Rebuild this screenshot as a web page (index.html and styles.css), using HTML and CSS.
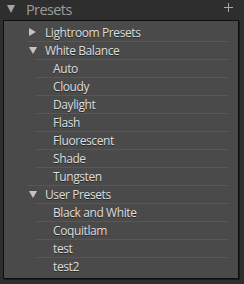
FILE: index.html
```html
<!DOCTYPE html>
<html>
<head>
<meta charset="utf-8">
<link rel="stylesheet" href="styles.css">
</head>
<body>
<div class="header">
  <span class="hdr-tri"></span>
  <span class="hdr-title">Presets</span>
  <svg class="plus" width="9" height="9" viewBox="0 0 9 9"><path d="M4.5 0V9M0 4.5H9" stroke="#a8a8a8" stroke-width="1"/></svg>
</div>
<div class="panel">
  <div class="row top"><span class="tri right"></span><span class="label">Lightroom Presets</span></div>
  <div class="row top"><span class="tri down"></span><span class="label">White Balance</span></div>
  <div class="row child"><span class="label">Auto</span></div>
  <div class="row child"><span class="label">Cloudy</span></div>
  <div class="row child"><span class="label">Daylight</span></div>
  <div class="row child"><span class="label">Flash</span></div>
  <div class="row child"><span class="label">Fluorescent</span></div>
  <div class="row child"><span class="label">Shade</span></div>
  <div class="row child"><span class="label">Tungsten</span></div>
  <div class="row top"><span class="tri down"></span><span class="label">User Presets</span></div>
  <div class="row child"><span class="label">Black and White</span></div>
  <div class="row child"><span class="label">Coquitlam</span></div>
  <div class="row child"><span class="label">test</span></div>
  <div class="row child"><span class="label">test2</span></div>
</div>
</body>
</html>
```
FILE: styles.css
```css
html, body {
  margin: 0;
  padding: 0;
}
body {
  background: #2e2e2e;
  width: 244px;
  height: 284px;
  font-family: "Open Sans", Lato, sans-serif;
  overflow: hidden;
}
.header {
  height: 20px;
  display: flex;
  align-items: flex-start;
  padding: 0 11px 0 7px;
  box-sizing: border-box;
}
.hdr-tri {
  width: 0;
  height: 0;
  border-left: 4.5px solid transparent;
  border-right: 4.5px solid transparent;
  border-top: 8px solid #a3a3a3;
  margin-top: 5px;
}
.hdr-title {
  color: #9c9c9c;
  font-size: 14.5px;
  line-height: 20px;
  letter-spacing: -0.6px;
  margin-left: 11px;
  flex: 1;
}
.plus {
  margin-top: 3px;
}
.panel {
  margin: 0 5px 0 3px;
  border: 1px solid #101010;
  box-shadow: 1px 1px 0 #1c1c1c;
  background: #4a4a4a;
  padding: 2px 0 3px;
}
.row {
  height: 18px;
  box-sizing: border-box;
  display: flex;
  align-items: center;
  margin-right: 9px;
  color: #dedede;
  font-size: 12px;
  letter-spacing: -0.4px;
  text-shadow: 0 1px 0 #2a2a2a;
}
.row + .row {
  border-top: 1px solid #575757;
}
.row.top {
  margin-left: 23px;
  padding-left: 2px;
}
.row.child {
  margin-left: 31px;
  padding-left: 18px;
}
.row + .row .label {
  margin-top: -1px;
}
.tri {
  width: 0;
  height: 0;
}
.tri.right {
  border-top: 4px solid transparent;
  border-bottom: 4px solid transparent;
  border-left: 7px solid #c4c4c4;
  margin-right: 9px;
}
.tri.down {
  border-left: 4px solid transparent;
  border-right: 4px solid transparent;
  border-top: 7px solid #c4c4c4;
  margin-right: 8px;
}
```
